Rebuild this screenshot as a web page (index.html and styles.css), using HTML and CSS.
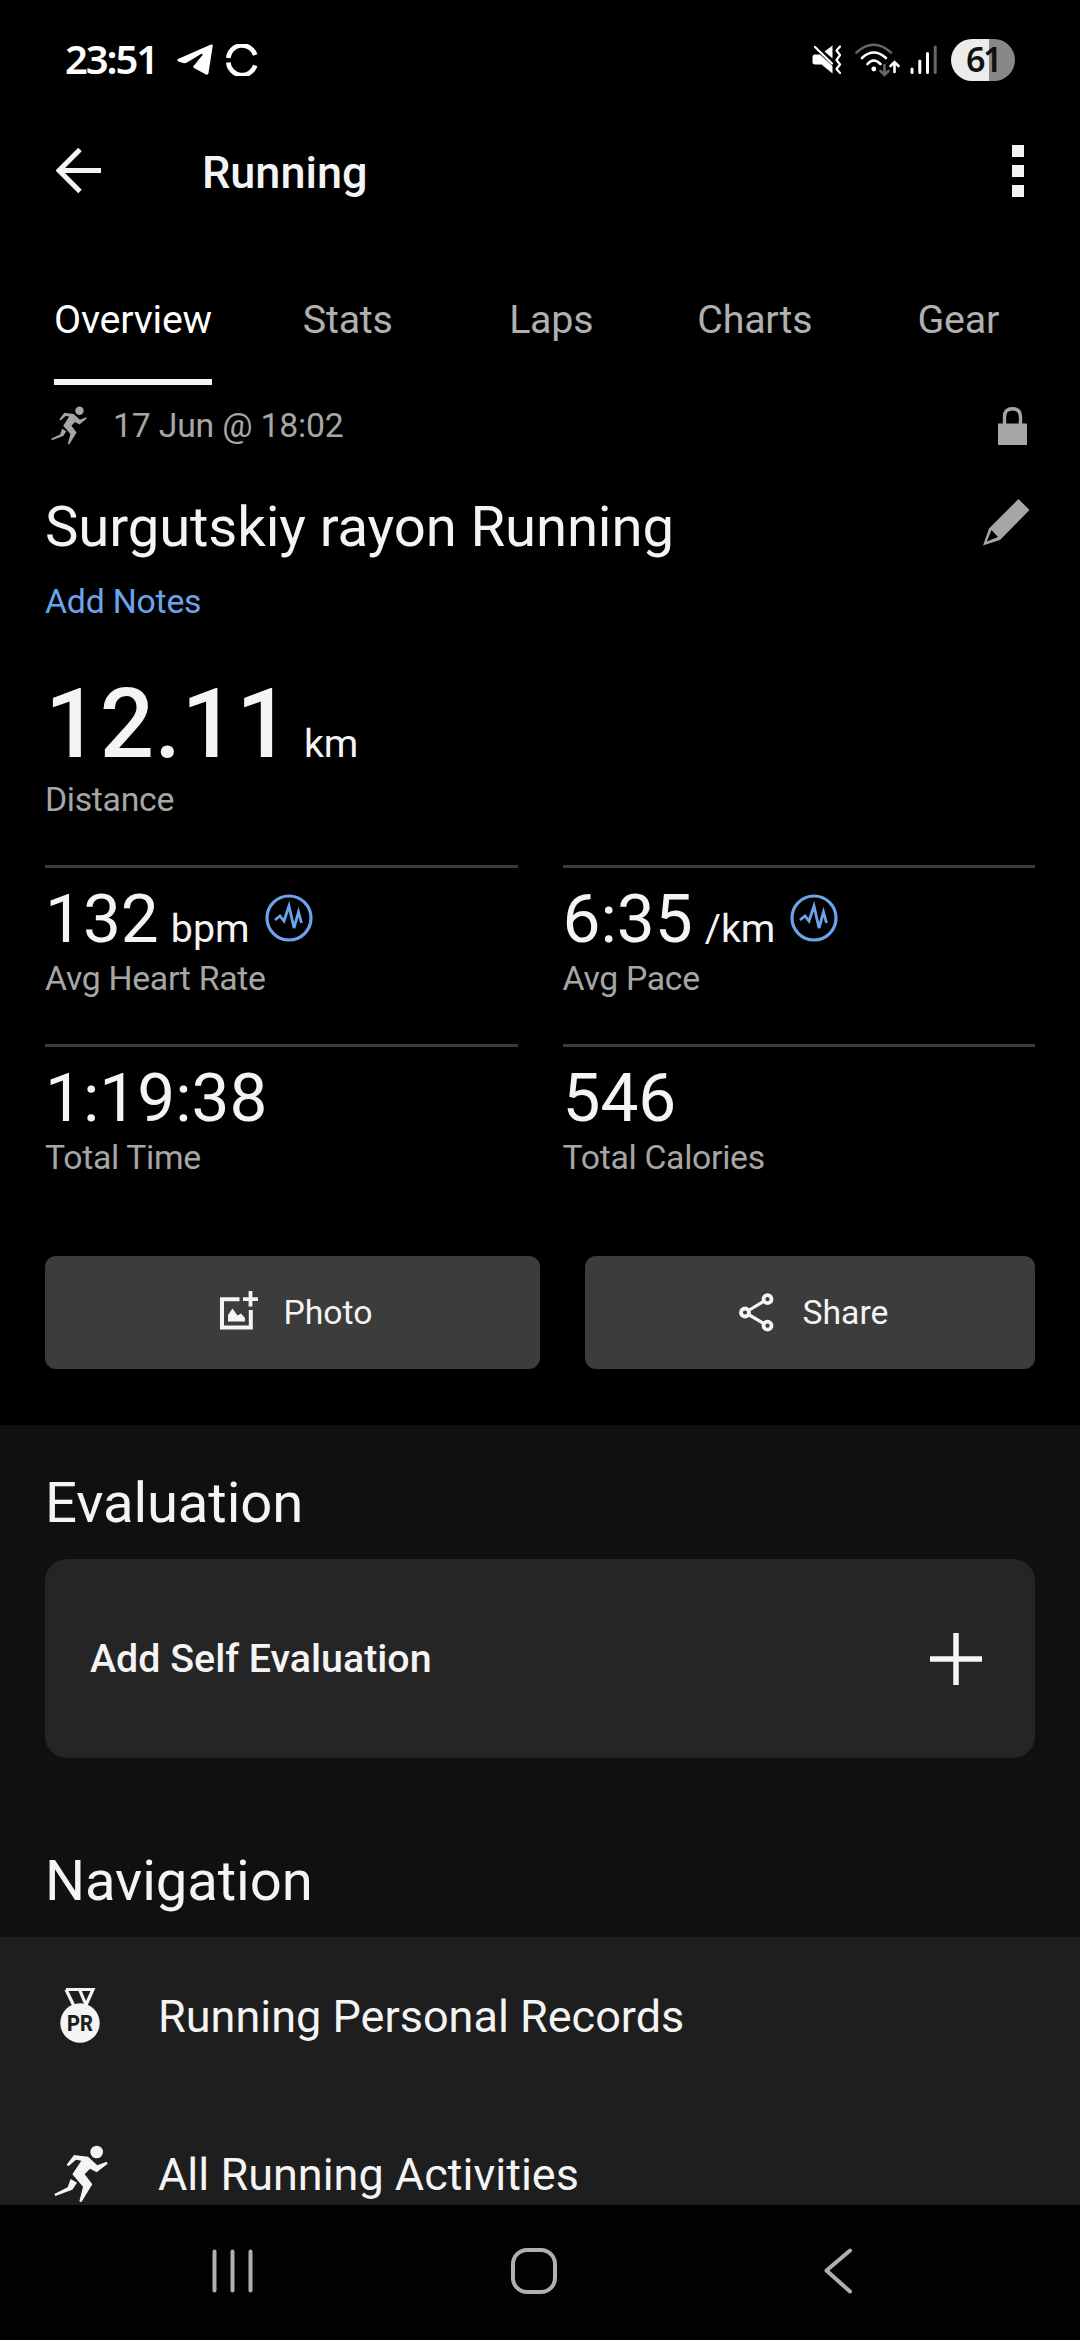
FILE: index.html
```html
<!DOCTYPE html>
<html lang="en">

<head>
  <meta charset="UTF-8">
  <meta name="viewport" content="width=device-width, initial-scale=1.0">
  <title>Running</title>
  <link rel="stylesheet" href="styles.css">
</head>

<body>
  <svg class="sprite" width="0" height="0">
    <symbol id="runner" viewBox="160 735 162 174">
      <circle cx="288" cy="756" r="19"/>
      <path d="M198 794L220 765L262 770L290 796L318 785L321 791L288 817L268 806L252 823L275 853L242 907L236 904L247 860L215 823L242 782L226 779L203 799Z"/>
      <path d="M210 837L229 848L215 869L164 888L161 882L201 862Z"/>
    </symbol>
    <symbol id="pulse" viewBox="0 0 48 48">
      <circle cx="24" cy="24" r="22" fill="none" stroke="currentColor" stroke-width="3.2"/>
      <path d="M10 26L15 22L19 27L24 12L29 34L33.5 18L36.5 29" fill="none" stroke="currentColor" stroke-width="2.8"/>
    </symbol>
  </svg>

  <div class="status-bar">
    <span class="clock">23:51</span>
    <svg class="icon-telegram" width="36" height="32" viewBox="0 0 36 32">
      <path d="M1 15L34 0.5Q36 0 35.7 2L31.5 29Q31 31.5 29 30.5L17 24Q15.500 23 17 21.500L25.500 11Q26 9 24 10L10 18.500Q8 19.500 6 19L1.500 17.500Q-0.500 16.500 1 15Z"/>
    </svg>
    <svg class="icon-ring" width="32" height="32" viewBox="0 0 32 32">
      <path d="M2.300 14A13.800 13.800 0 0 1 29.200 11M2.300 18.500A13.800 13.800 0 0 0 29.200 21.500" fill="none" stroke="#fff" stroke-width="4.600"/>
    </svg>

    <div class="status-right">
      <svg width="30" height="30" viewBox="0 0 30 30">
        <path d="M3 9.500H8L20.500 21V28.500L9.500 19.500H3Q0.500 19.500 0.500 17V12Q0.500 9.500 3 9.500ZM12.500 6.500L20.500 0.500V13.500Z"/>
        <path d="M3 2L20 18.500" stroke="#fff" stroke-width="2.200" stroke-linecap="round"/>
        <path d="M28 1.500L24.500 5.500L28 10L24.500 15L28 19.500L24.500 24L28 28" fill="none" stroke="#fff" stroke-width="2.200" stroke-linecap="round" stroke-linejoin="round"/>
      </svg>
      <svg class="icon-wifi" width="45" height="34" viewBox="0 0 45 34">
        <g fill="none" stroke="#fff" stroke-width="2.600" stroke-linecap="round">
          <path d="M1.500 9.500Q18.500 -6 36 9.500" stroke="#666"/>
          <path d="M7 15Q18.500 4 31 15"/>
          <path d="M12.500 21Q18.500 14 25.500 21"/>
          <path d="M29.500 22V31M25.500 28L29.500 32L33.500 28" stroke="#666"/>
          <path d="M39.500 29V19M35.500 23L39.500 19L43.500 23"/>
        </g>
        <circle cx="18.800" cy="26" r="2.400"/>
      </svg>
      <svg class="icon-signal" width="28" height="30" viewBox="0 0 28 30">
        <g stroke="#fff" stroke-width="3" stroke-linecap="round">
          <path d="M2 24V27.500M9.800 16V27.500M17.500 8.500V27.500"/>
          <path d="M25.200 2V27.500" stroke="#666"/>
        </g>
      </svg>
      <div class="battery">61</div>
    </div>
  </div>

  <div class="header">
    <svg width="46" height="46" viewBox="0 0 46 46">
      <path d="M45 22.500H4M24 1.500L3 22.500L24 43.500" fill="none" stroke="#f4f4f4" stroke-width="5"/>
    </svg>
    <h1>Running</h1>
    <div class="menu">
      <span></span>
      <span></span>
      <span></span>
    </div>
  </div>

  <div class="tabs">
    <div class="tab active"><span>Overview</span></div>
    <div class="tab"><span>Stats</span></div>
    <div class="tab"><span>Laps</span></div>
    <div class="tab"><span>Charts</span></div>
    <div class="tab"><span>Gear</span></div>
  </div>

  <div class="summary">
    <div class="date-row">
      <svg class="icon-runner" width="36" height="39"><use href="#runner"/></svg>
      <span>17 Jun @ 18:02</span>
      <svg class="icon-lock" width="29" height="38" viewBox="0 0 29 38">
        <path d="M0 16.500H29V38H0Z"/>
        <path d="M6.500 17V10Q6.500 1.800 14.500 1.800Q22.500 1.800 22.500 10V17" fill="none" stroke="#a6a6a6" stroke-width="3.400"/>
      </svg>
    </div>

    <div class="title-row">
      <h2>Surgutskiy rayon Running</h2>
      <svg class="icon-pencil" width="47" height="47" viewBox="0 0 47 47">
        <path d="M35.500 0L46.500 11L17 41L0 46.500L6 29.500ZM8.500 31L3.800 42.500L15 38Z" fill-rule="evenodd"/>
      </svg>
    </div>
    <a class="notes">Add Notes</a>

    <div class="distance">
      <div class="value"><b>12.11</b><span class="unit">km</span></div>
      <div class="label">Distance</div>
    </div>

    <div class="metrics">
      <div class="metric">
        <div class="value">132<span class="unit">bpm</span><svg class="icon-pulse" width="48" height="48"><use href="#pulse"/></svg></div>
        <div class="label">Avg Heart Rate</div>
      </div>
      <div class="metric">
        <div class="value">6:35<span class="unit">/km</span><svg class="icon-pulse" width="48" height="48"><use href="#pulse"/></svg></div>
        <div class="label">Avg Pace</div>
      </div>
      <div class="metric">
        <div class="value">1:19:38</div>
        <div class="label">Total Time</div>
      </div>
      <div class="metric">
        <div class="value">546</div>
        <div class="label">Total Calories</div>
      </div>
    </div>

    <div class="buttons">
      <button class="btn photo">
        <svg width="38" height="39" viewBox="0 0 38 39">
          <path d="M19.500 8.200H2V36.500H30.800V19" fill="none" stroke="#f4f4f4" stroke-width="4"/>
          <path d="M30.500 0V15.500M23 8.200H38" stroke="#f4f4f4" stroke-width="3.800"/>
          <path d="M8 30.500V24L12.500 17.500L17.500 24.500L21 22.500L25 27V30.500Z"/>
        </svg>
        Photo
      </button>
      <button class="btn share">
        <svg width="35" height="39" viewBox="0 0 35 39">
          <g fill="none" stroke="#f4f4f4" stroke-width="3.800">
            <circle cx="6" cy="19.500" r="4"/>
            <circle cx="28.500" cy="6.200" r="4"/>
            <circle cx="28.500" cy="32.700" r="4"/>
            <path d="M9.500 17.500L25 8.200M9.500 21.500L25 30.700" stroke-width="3.200"/>
          </g>
        </svg>
        Share
      </button>
    </div>
  </div>

  <div class="details">
    <h2>Evaluation</h2>
    <div class="card">
      <span>Add Self Evaluation</span>
      <svg width="52" height="52" viewBox="0 0 52 52">
        <path d="M26 0V52M0 26H52" stroke="#f4f4f4" stroke-width="5.500"/>
      </svg>
    </div>
    <h2 class="nav-title">Navigation</h2>
  </div>

  <div class="nav-list">
    <div class="nav-item">
      <svg class="icon-medal" width="40" height="55" viewBox="0 0 40 55">
        <path d="M6 1.500H33L26 17M6 1.500L13.500 17M19.500 1.500L26 17" fill="none" stroke="#f4f4f4" stroke-width="3.200"/>
        <circle cx="20" cy="35" r="19.700"/>
        <text x="20" y="43.300" text-anchor="middle" textLength="26" lengthAdjust="spacingAndGlyphs">PR</text>
      </svg>
      <span>Running Personal Records</span>
    </div>
    <div class="nav-item">
      <svg width="54" height="58"><use href="#runner"/></svg>
      <span>All Running Activities</span>
    </div>
  </div>

  <div class="system-nav">
    <svg width="42" height="46" viewBox="0 0 42 46">
      <path d="M2.500 3.500V42.500M20.500 3.500V42.500M38.500 3.500V42.500" stroke="#b0b0b0" stroke-width="4" stroke-linecap="round"/>
    </svg>
    <svg class="icon-home" width="46" height="46" viewBox="0 0 46 46">
      <rect x="2" y="2" width="42" height="42" rx="14" fill="none" stroke="#b0b0b0" stroke-width="4"/>
    </svg>
    <svg width="30" height="46" viewBox="0 0 30 46">
      <path d="M27 2.500L3.500 22.500L27 43.500" fill="none" stroke="#b0b0b0" stroke-width="4" stroke-linecap="round" stroke-linejoin="round"/>
    </svg>
  </div>
</body>

</html>
```
FILE: styles.css
```css
* {
  box-sizing: border-box;
}

body {
  margin: 0;
  width: 1080px;
  height: 2340px;
  overflow: hidden;
  background-color: #000;
  color: #f4f4f4;
  font-family: Roboto, sans-serif;
  font-size: 33.75px;
}

svg {
  display: block;
  flex: none;
  fill: currentColor;
}

.sprite {
  display: none;
}

h1,
h2 {
  margin: 0;
}

/* Status bar */
.status-bar {
  display: flex;
  align-items: center;
  height: 120px;
  padding: 0 65px;
  color: #fff;
}

.clock {
  width: 112px;
  margin-bottom: 4px;
  font-family: "Noto Sans", sans-serif;
  font-size: 40px;
  font-weight: 600;
  letter-spacing: -2.1px;
}

.icon-ring {
  margin-left: 13px;
}

.status-right {
  display: flex;
  align-items: center;
  margin-left: auto;
}

.icon-wifi {
  margin-left: 13px;
}

.icon-signal {
  margin-left: 10px;
}

.battery {
  width: 64px;
  height: 42px;
  margin-left: 13px;
  border-radius: 21px;
  background: linear-gradient(to right, #ececec 60%, #888 60%);
  color: #111;
  font-family: "Noto Sans", sans-serif;
  font-size: 34px;
  font-weight: 600;
  line-height: 40px;
  letter-spacing: -2.5px;
  text-align: center;
}

/* Title bar */
.header {
  display: flex;
  align-items: center;
  height: 105px;
  padding: 0 56px;
}

.header svg {
  margin-bottom: 3px;
}

.header h1 {
  margin-left: 100px;
  font-size: 45px;
  font-weight: 500;
}

.menu {
  display: flex;
  flex-direction: column;
  gap: 8px;
  margin-left: auto;
  margin-bottom: 3px;
}

.menu span {
  width: 12px;
  height: 12px;
  background-color: #f4f4f4;
}

/* Tabs */
.tabs {
  display: grid;
  grid-template-columns: 226px repeat(4, 1fr);
  height: 160px;
  padding: 70px 20px 0;
  font-size: 39.375px;
  line-height: 49px;
  letter-spacing: -0.2px;
  color: #b0b0b0;
}

.tab {
  display: flex;
  justify-content: center;
}

.tab.active span {
  color: #fff;
  padding-bottom: 35px;
  border-bottom: 6px solid #f4f4f4;
}

/* Activity summary */
.summary {
  height: 1040px;
  padding: 0 45px;
}

.date-row {
  display: flex;
  align-items: center;
  height: 81px;
  color: #a6a6a6;
  letter-spacing: -0.2px;
}

.icon-runner {
  margin-left: 6px;
  margin-right: 26px;
}

.icon-lock {
  margin-left: auto;
  margin-right: 8px;
}

.title-row {
  display: flex;
  justify-content: space-between;
  margin-top: 28px;
}

h2 {
  font-size: 56.25px;
  font-weight: 400;
  line-height: 66px;
  letter-spacing: -0.1px;
}

.icon-pencil {
  margin: 5px 5px 0 0;
  color: #a6a6a6;
}

.notes {
  display: block;
  margin-top: 22px;
  line-height: 40px;
  letter-spacing: -0.2px;
  color: #6ca4ec;
}

.value {
  display: flex;
  align-items: baseline;
  font-size: 67.5px;
  line-height: 80px;
}

.unit {
  margin-left: 12px;
  font-size: 39.375px;
  line-height: 40px;
}

.label {
  line-height: 40px;
  letter-spacing: -0.3px;
  color: #a6a6a6;
}

.distance {
  margin-top: 52px;
}

.distance .value {
  line-height: 100px;
  margin-bottom: 6px;
}

.distance b {
  font-size: 95.6px;
  font-weight: 500;
  letter-spacing: 0.4px;
}

.distance .unit {
  margin-left: 13px;
}

.metrics {
  display: grid;
  grid-template-columns: 1fr 1fr;
  grid-auto-rows: 179px;
  column-gap: 45px;
  margin-top: 45px;
}

.metric {
  padding-top: 11px;
  border-top: 3px solid #3b3b3b;
}

.icon-pulse {
  align-self: center;
  margin-left: 15px;
  margin-bottom: 3px;
  color: #6ca4ec;
}

.buttons {
  display: flex;
  gap: 45px;
  margin-top: 33px;
}

.btn {
  display: flex;
  align-items: center;
  justify-content: center;
  height: 113px;
  padding: 0 0 0 8px;
  border: none;
  border-radius: 11px;
  background-color: #3c3c3c;
  color: #f4f4f4;
  font-family: inherit;
  font-size: 33.75px;
}

.photo {
  width: 495px;
  gap: 25px;
}

.photo svg {
  margin-bottom: 4px;
}

.share {
  width: 450px;
  gap: 28px;
}

/* Evaluation and navigation */
.details {
  height: 512px;
  padding: 45px 45px 0;
  background-color: #101010;
}

.card {
  display: flex;
  align-items: center;
  justify-content: space-between;
  height: 199px;
  margin-top: 23px;
  padding: 0 53px 0 45px;
  border-radius: 22px;
  background-color: #252525;
  font-size: 39.375px;
  font-weight: 500;
}

.nav-title {
  margin-top: 90px;
}

.nav-list {
  height: 268px;
  overflow: hidden;
  background-color: #1e1e1e;
}

.nav-item {
  display: flex;
  align-items: center;
  height: 158px;
  padding-left: 54px;
  font-size: 45px;
}

.nav-item span {
  margin-left: 50px;
}

.icon-medal {
  margin: 0 8px 2px 6px;
}

.icon-medal text {
  fill: #1e1e1e;
  font-size: 22px;
  font-weight: 800;
}

.system-nav {
  display: flex;
  align-items: center;
  height: 135px;
  padding: 0 227px 4px 212px;
  justify-content: space-between;
  background-color: #020202;
}

.icon-home {
  margin-right: 10px;
}
```
